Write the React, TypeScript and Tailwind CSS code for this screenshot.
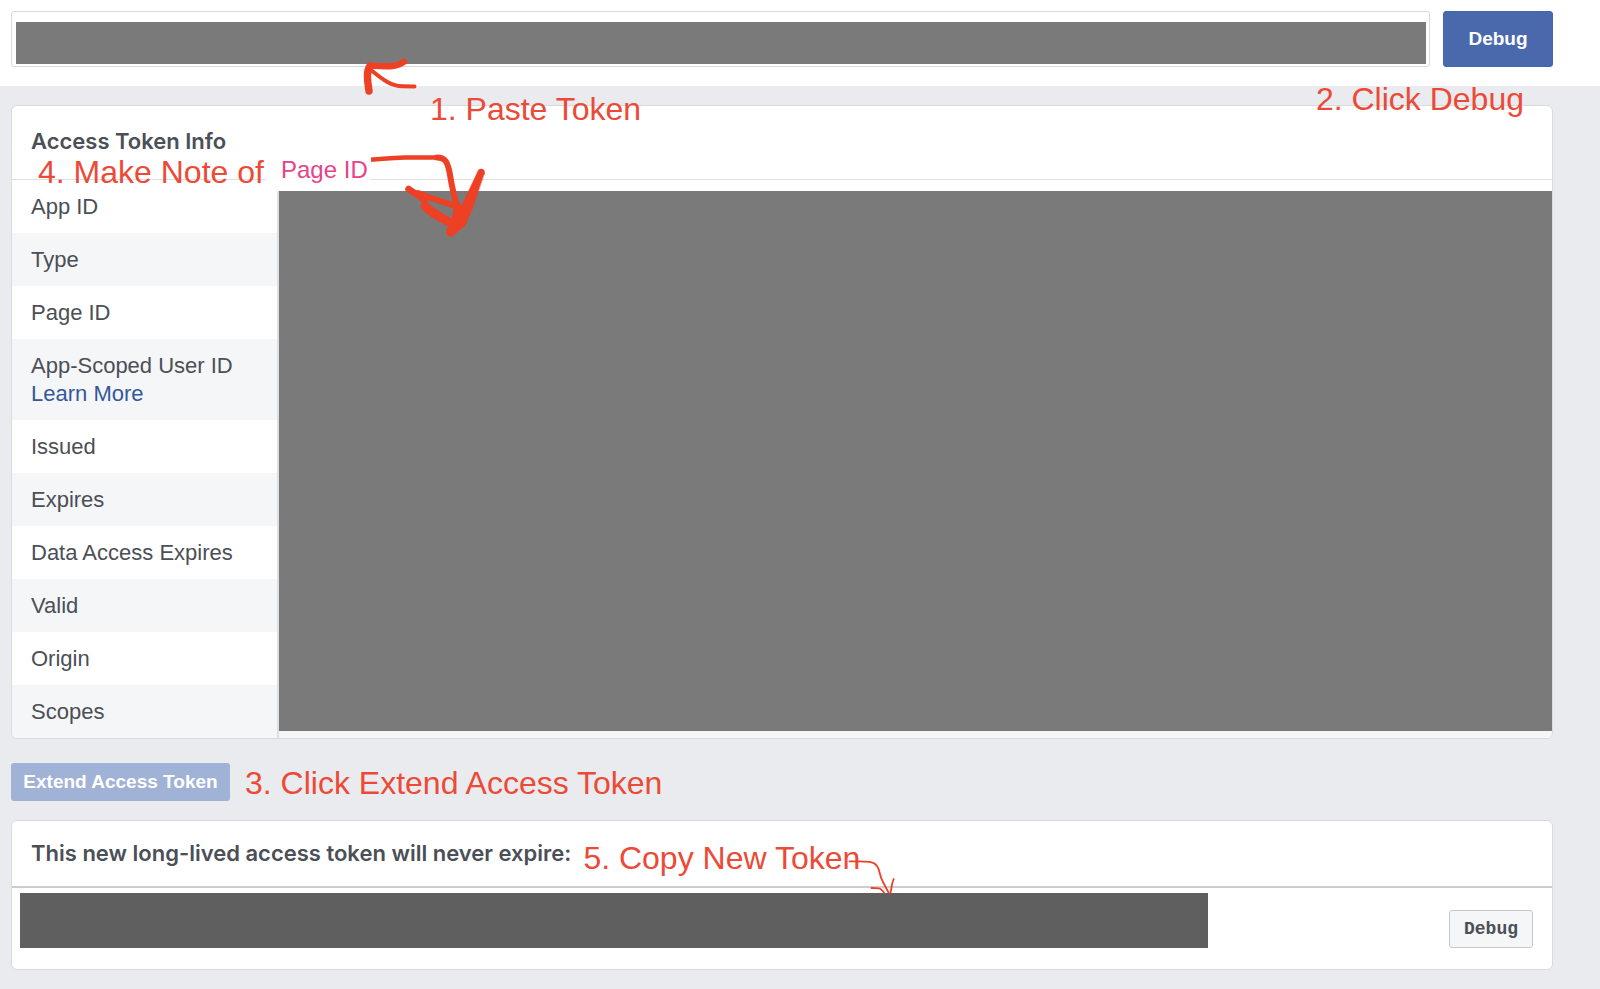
const rows: { label: string; link?: string }[] = [
  { label: "App ID" },
  { label: "Type" },
  { label: "Page ID" },
  { label: "App-Scoped User ID", link: "Learn More" },
  { label: "Issued" },
  { label: "Expires" },
  { label: "Data Access Expires" },
  { label: "Valid" },
  { label: "Origin" },
  { label: "Scopes" },
];

const note = "whitespace-nowrap text-[32px] leading-9 text-[#ec4a37]";

function PasteArrow() {
  return (
    <svg
      className="pointer-events-none absolute left-[360px] top-[55px] z-10 h-[42px] w-[60px]"
      viewBox="360 55 60 42"
      fill="none"
      stroke="#ed4024"
      strokeLinecap="round"
      strokeLinejoin="round"
      aria-hidden="true"
    >
      <path d="M404 61.800C397 67 390 66.500 371 65.800" strokeWidth="6.400" />
      <path d="M370 65.800C366 72 367.500 80 369 91" strokeWidth="7.400" />
      <path d="M371 70C383 80 392 86.500 403 86.200L414.500 86.400" strokeWidth="4" />
    </svg>
  );
}

function PageIdArrow() {
  return (
    <svg
      className="pointer-events-none absolute left-[370px] top-[150px] z-10 h-[92px] w-[120px]"
      viewBox="370 150 120 92"
      fill="none"
      stroke="#ed4024"
      strokeLinecap="round"
      strokeLinejoin="round"
      aria-hidden="true"
    >
      <path d="M371 159.800C385 158.800 390 157.700 405 157.500L438 157.500" strokeWidth="4.400" strokeLinecap="butt" />
      <path d="M437 157.500C446 157.500 447.500 163 449.500 172C452 188 454 198 459 212" strokeWidth="6" />
      <path d="M484.300 173L478 171L456 218L460 227L465 226L473 207Z" fill="#ed4024" strokeWidth="0.500" />
      <circle cx="481.200" cy="172.300" r="3.500" fill="#ed4024" stroke="none" />
      <path d="M408.500 189L425 200" strokeWidth="6.500" />
      <path d="M418 193C432 199 444 202 455 206" strokeWidth="6" />
      <path d="M425 206C434 215 444 219 456 226" strokeWidth="9" />
      <path d="M450.500 232L456 221L458 208" strokeWidth="9" />
      <path d="M450.500 232L461 223" strokeWidth="9" />
    </svg>
  );
}

function CopyArrow() {
  return (
    <svg
      className="pointer-events-none absolute left-[845px] top-[855px] z-10 h-[40px] w-[52px]"
      viewBox="845 855 52 40"
      fill="none"
      stroke="#ed4024"
      strokeWidth="1.800"
      strokeLinecap="round"
      aria-hidden="true"
    >
      <path d="M849.500 861.300C866 861.500 873 860.500 877 866C880.500 871 879 875 883 882L888.500 892.500" />
      <path d="M871.500 888C879 888.500 880 887 884 892.500" />
      <path d="M893.700 879C891 885 892 888 890.500 892.500" />
    </svg>
  );
}

export default function App() {
  return (
    <div className="relative min-h-screen bg-[#e9ebee] font-['Liberation_Sans',Arial,sans-serif] text-[22px] leading-7 text-[#4b4f56]">
      <form
        className="flex items-start gap-[13px] bg-white pb-[19px] pl-[11px] pr-[47px] pt-[11px]"
        onSubmit={(e) => e.preventDefault()}
      >
        <div className="relative flex-1">
          <input
            aria-label="Access token"
            className="block h-14 w-full rounded-[3px] border border-[#d8dadf] bg-white px-3"
          />
          <div className="pointer-events-none absolute bottom-[3px] left-[5px] right-[4px] top-[11px] bg-[#7a7a7a]" />
        </div>
        <button
          type="submit"
          className="h-14 w-[110px] rounded-[3px] border border-[#4267b2] bg-[#4a69ad] text-[19px] font-bold text-white"
        >
          Debug
        </button>
      </form>

      <main className="pl-[11px] pr-[47px] pt-[19px]">
        <section className="relative rounded-md border border-[#d8dadf] bg-white">
          <h2 className="flex h-[74px] items-center border-b border-[#dddfe2] pb-1 pl-[19px] font-['Inter',sans-serif] font-semibold">
            Access Token Info
          </h2>
          <div className="overflow-hidden rounded-b-md">
            <table className="w-full border-separate border-spacing-0 text-left">
              <tbody>
                {rows.map((row) => (
                  <tr key={row.label} className="even:bg-[#f5f6f8]">
                    <th
                      scope="row"
                      className="w-[267px] border-r-2 border-[#dddfe2] pb-3 pl-[19px] pt-[13px] font-normal"
                    >
                      {row.label}
                      {row.link && (
                        <a href="#learn-more" className="block text-[#365899]">
                          {row.link}
                        </a>
                      )}
                    </th>
                    <td className="p-0" />
                  </tr>
                ))}
              </tbody>
            </table>
          </div>
          <div className="absolute bottom-[7px] left-[267px] right-0 top-[85px] bg-[#7a7a7a]" />
          <div className="absolute left-[254px] top-[49px] h-9 w-[104px] whitespace-nowrap bg-white pl-[15px] text-2xl leading-[30px] text-[#e7428a]">
            Page ID
          </div>
        </section>

        <div className="flex items-center gap-[15px] pb-[19px] pt-6">
          <button
            type="button"
            className="h-[38px] w-[219px] rounded-[3px] bg-[#a0b3d6] text-[19px] font-bold text-white"
          >
            Extend Access Token
          </button>
          <p className={`${note} pt-0.5`}>3. Click Extend Access Token</p>
        </div>

        <section className="rounded-md border border-[#d8dadf] bg-white">
          <div className="flex h-[67px] items-center gap-3 border-b-2 border-[#cccdcf] pl-[19px]">
            <h2 className="whitespace-nowrap pb-px font-['Inter',sans-serif] font-semibold">
              This new long-lived access token will never expire:
            </h2>
            <p className={`${note} pt-2`}>5. Copy New Token</p>
          </div>
          <div className="flex items-start gap-[241px] pb-[21px] pl-2 pr-[19px] pt-[5px]">
            <div className="h-[55px] flex-1 bg-[#5f5f5f]" />
            <button
              type="button"
              className="mt-[17px] h-[38px] w-[84px] rounded-[3px] border border-[#c4c9d0] bg-[#f5f6f7] font-['Liberation_Mono','Courier_New',monospace] text-lg font-bold"
            >
              Debug
            </button>
          </div>
        </section>
      </main>

      <p className={`${note} absolute left-[430px] top-[91px]`}>1. Paste Token</p>
      <p className={`${note} absolute right-[76px] top-[81px]`}>2. Click Debug</p>
      <p className={`${note} absolute left-[38px] top-[154px]`}>4. Make Note of</p>
      <PasteArrow />
      <PageIdArrow />
      <CopyArrow />
    </div>
  );
}
